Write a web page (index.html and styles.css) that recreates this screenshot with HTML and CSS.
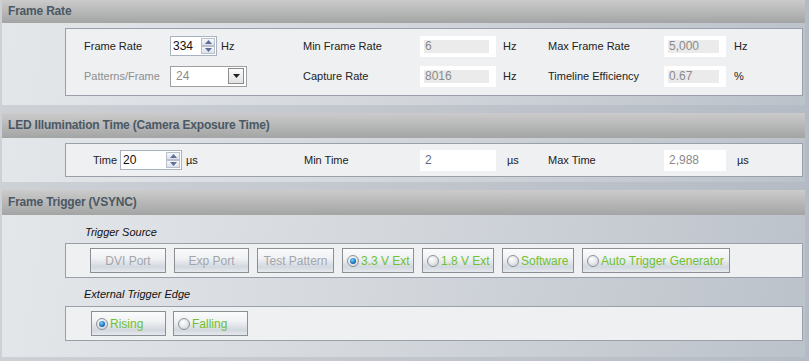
FILE: index.html
```html
<!DOCTYPE html>
<html lang="en">
<head>
  <meta charset="UTF-8" />
  <title>Timing</title>
  <link rel="stylesheet" href="styles.css">
</head>
<body>
  <!-- Frame Rate -->
  <div class="section">
    <div class="section-head first">Frame Rate</div>
    <div class="section-body rate-body">
      <div class="box rate-grid">
        <span class="label">Frame Rate</span>
        <div class="ctl">
          <div class="spin narrow">
            <span class="spin-val">334</span>
            <span class="spin-btns">
              <span class="spin-btn"><svg width="7" height="4" viewBox="0 0 7 4"><path d="M0 4 L3.5 0 L7 4 Z" fill="#5d6f96"/></svg></span>
              <span class="spin-btn"><svg width="7" height="4" viewBox="0 0 7 4"><path d="M0 0 L3.5 4 L7 0 Z" fill="#5d6f96"/></svg></span>
            </span>
          </div>
          <span class="unit">Hz</span>
        </div>
        <span class="label">Min Frame Rate</span>
        <div class="field off"><span>6</span></div>
        <span class="unit">Hz</span>
        <span class="label">Max Frame Rate</span>
        <div class="field off short"><span>5,000</span></div>
        <span class="unit">Hz</span>

        <span class="label dim">Patterns/Frame</span>
        <div class="ctl">
          <div class="combo">
            <span class="combo-val">24</span>
            <span class="combo-btn"><svg width="7" height="4" viewBox="0 0 7 4"><path d="M0 0 L3.5 4 L7 0 Z" fill="#222"/></svg></span>
          </div>
        </div>
        <span class="label">Capture Rate</span>
        <div class="field off"><span>8016</span></div>
        <span class="unit">Hz</span>
        <span class="label">Timeline Efficiency</span>
        <div class="field off short"><span>0.67</span></div>
        <span class="unit">%</span>
      </div>
    </div>
  </div>

  <!-- LED Illumination -->
  <div class="section">
    <div class="section-head">LED Illumination Time (Camera Exposure Time)</div>
    <div class="section-body led-body">
      <div class="box led-grid">
        <span class="label">Time</span>
        <div class="ctl">
          <div class="spin wide">
            <span class="spin-val">20</span>
            <span class="spin-btns">
              <span class="spin-btn"><svg width="7" height="4" viewBox="0 0 7 4"><path d="M0 4 L3.5 0 L7 4 Z" fill="#5d6f96"/></svg></span>
              <span class="spin-btn"><svg width="7" height="4" viewBox="0 0 7 4"><path d="M0 0 L3.5 4 L7 0 Z" fill="#5d6f96"/></svg></span>
            </span>
          </div>
          <span class="unit">&micro;s</span>
        </div>
        <span class="label">Min Time</span>
        <div class="field"><span class="blue">2</span></div>
        <span class="unit">&micro;s</span>
        <span class="label">Max Time</span>
        <div class="field short"><span class="grey">2,988</span></div>
        <span class="unit">&micro;s</span>
      </div>
    </div>
  </div>

  <!-- Frame Trigger -->
  <div class="section">
    <div class="section-head">Frame Trigger (VSYNC)</div>
    <div class="section-body trig-body">
      <div class="caption">Trigger Source</div>
      <div class="box btn-row">
        <button class="tbtn off w76">DVI Port</button>
        <button class="tbtn off w75">Exp Port</button>
        <button class="tbtn off w77">Test Pattern</button>
        <button class="tbtn radio w72"><span class="dot on"></span>3.3 V Ext</button>
        <button class="tbtn radio w72"><span class="dot"></span>1.8 V Ext</button>
        <button class="tbtn radio w72"><span class="dot"></span>Software</button>
        <button class="tbtn radio w148"><span class="dot"></span>Auto Trigger Generator</button>
      </div>
      <div class="caption second">External Trigger Edge</div>
      <div class="box btn-row edge">
        <button class="tbtn radio w75"><span class="dot on"></span>Rising</button>
        <button class="tbtn radio w75"><span class="dot"></span>Falling</button>
      </div>
    </div>
  </div>
</body>
</html>
```

FILE: styles.css
```css
body {
  margin: 0;
  width: 809px;
  height: 361px;
  overflow: hidden;
  background: linear-gradient(to right, #cdd1d6, #b5bbc4);
  font-family: "Liberation Sans", Arial, sans-serif;
  font-size: 11px;
  color: #222;
}

.section {
  margin: 0 4px 8px 2px;
}

/* 标题栏 */
.section-head {
  height: 25px;
  line-height: 25px;
  padding-left: 6px;
  background: linear-gradient(to bottom, #cbcbcb, #a3a4a4);
  font-size: 12px;
  font-weight: bold;
  color: #4b5864;
  letter-spacing: -0.2px;
  white-space: nowrap;
}
.section-head.first {
  height: 23px;
  line-height: 23px;
}

.section-body {
  background: linear-gradient(100deg, #e4e7ea 0%, #d4d8dd 45%, #bcc2ca 100%);
  padding-left: 63px;
  padding-right: 2px;
}

.box {
  background: #eff0f2;
  border: 1px solid #9aa0aa;
}

/* Frame Rate 区 */
.rate-body {
  padding-top: 5px;
  padding-bottom: 9px;
}
.rate-grid {
  display: grid;
  grid-template-columns: 86px 133px 117px 83px 45px 116px 70px auto;
  grid-auto-rows: 22px;
  row-gap: 8px;
  align-items: center;
  padding: 6px 0 8px 18px;
}

.led-body {
  padding-top: 5px;
  padding-bottom: 5px;
}
.led-grid {
  display: grid;
  grid-template-columns: 27px 184px 116px 87px 41px 116px 73px auto;
  height: 32px;
  align-items: center;
  padding-left: 27px;
}

.label {
  white-space: nowrap;
}
.label.dim {
  color: #8e8e8e;
}
.unit {
  white-space: nowrap;
}

.ctl {
  display: flex;
  align-items: center;
  gap: 4px;
}

/* 数字输入框 */
.spin {
  display: flex;
  height: 20px;
  box-sizing: border-box;
  border: 1px solid #a9b3bf;
  background: white;
}
.spin.narrow {
  width: 47px;
}
.spin.wide {
  width: 62px;
}
.spin-val {
  flex: 1;
  padding-left: 2px;
  line-height: 18px;
  font-size: 12px;
  color: #111;
}
.spin-btns {
  display: flex;
  flex-direction: column;
  width: 14px;
  padding: 1px 1px 1px 0;
  gap: 0;
}
.spin-btn {
  flex: 1;
  display: flex;
  justify-content: center;
  align-items: center;
  border: 1px solid #b7c0cc;
  background: linear-gradient(to bottom, #f6f7f9, #dde2e8);
}

/* 下拉框 */
.combo {
  display: flex;
  align-items: center;
  width: 77px;
  height: 21px;
  box-sizing: border-box;
  border: 1px solid #a0a0a0;
  background: white;
  padding: 2px;
}
.combo-val {
  flex: 1;
  padding-left: 3px;
  font-size: 12px;
  color: #8c8c8c;
}
.combo-btn {
  width: 14px;
  height: 14px;
  display: flex;
  justify-content: center;
  align-items: center;
  border: 1px solid #8c8c8c;
  background: linear-gradient(to bottom, #fbfbfb, #e2e2e2);
}

/* 只读字段 */
.field {
  width: 76px;
  height: 21px;
  box-sizing: border-box;
  background: white;
  padding: 0 5px;
  line-height: 21px;
  font-size: 12px;
}
.field.short {
  width: 62px;
}
.field.off {
  padding: 4px 7px 4px 4px;
  line-height: 13px;
}
.field.off span {
  display: block;
  height: 13px;
  background: #ebebeb;
  color: #8a8a8a;
  padding-left: 1px;
}
.field .blue {
  color: #5e6d80;
}
.field .grey {
  color: #8a8a8a;
}

/* 触发区 */
.trig-body {
  padding-top: 9px;
  padding-bottom: 16px;
}
.caption {
  font-style: italic;
  height: 16px;
  line-height: 16px;
  padding-left: 20px;
  margin-bottom: 3px;
  color: #111;
}
.caption.second {
  margin-top: 8px;
  margin-bottom: 4px;
  padding-left: 19px;
}

.btn-row {
  display: flex;
  gap: 8px;
  height: 33px;
  align-items: center;
  padding-left: 24px;
}
.btn-row.edge {
  gap: 7px;
  padding-left: 25px;
}

.tbtn {
  height: 25px;
  box-sizing: border-box;
  border: 1px solid #8b9097;
  border-radius: 0;
  background: linear-gradient(to bottom, #fafbfb 0%, #f0f2f4 40%, #dfe3e8 62%, #d2d8df 78%, #e6e9ed 100%);
  font-family: "Liberation Sans", Arial, sans-serif;
  font-size: 12px;
  padding: 0;
  display: flex;
  align-items: center;
  justify-content: center;
  white-space: nowrap;
}
.tbtn.off {
  color: #a2a6ab;
}
.tbtn.radio {
  justify-content: flex-start;
  padding-left: 4px;
  color: #6fc12f;
}
.w72 { width: 72px; }
.w75 { width: 75px; }
.w76 { width: 76px; }
.w77 { width: 77px; }
.w148 { width: 148px; }

/* 单选圆点 */
.dot {
  width: 12px;
  height: 12px;
  box-sizing: border-box;
  border-radius: 50%;
  border: 1px solid #8e9297;
  background: radial-gradient(circle at 40% 35%, #ffffff, #d9dcdf 70%, #c4c8cc);
  margin-right: 2px;
  flex: none;
  position: relative;
}
.dot.on::after {
  content: '';
  position: absolute;
  left: 2px;
  top: 2px;
  width: 6px;
  height: 6px;
  border-radius: 50%;
  background: radial-gradient(circle at 40% 35%, #7fd0ff, #1a78c2 55%, #0b3f78);
}
```
